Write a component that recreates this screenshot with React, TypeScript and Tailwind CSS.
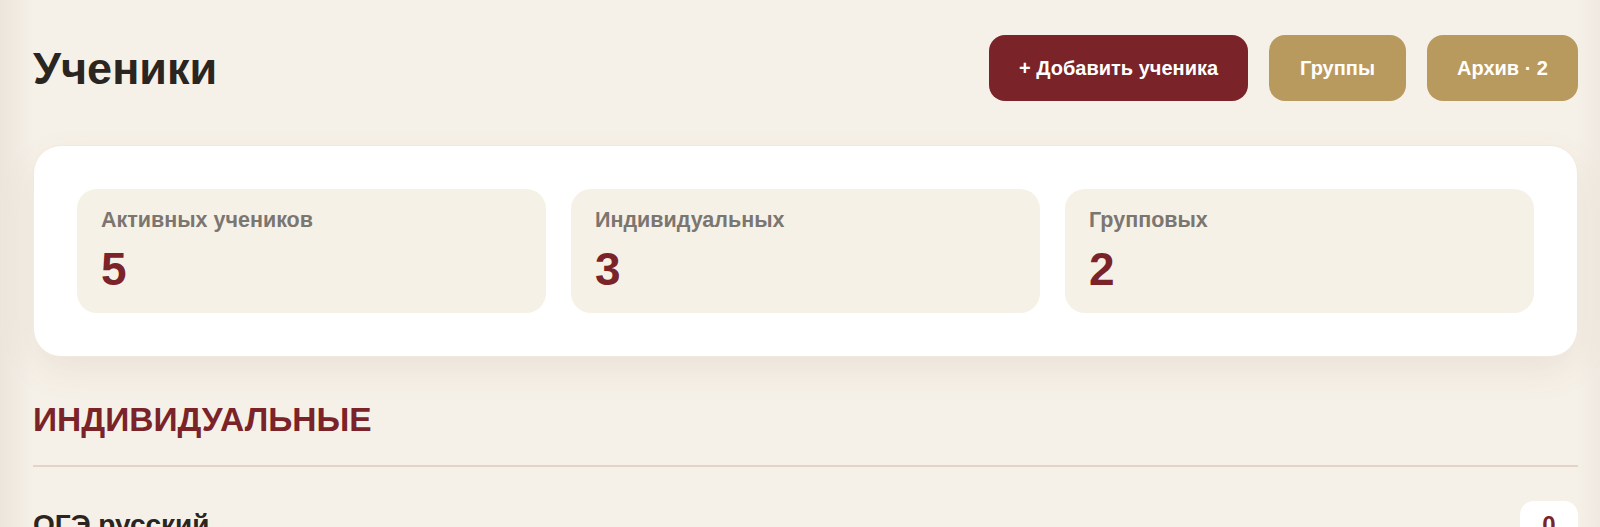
import React from "react";

const stats = [
  { label: "Активных учеников", value: "5" },
  { label: "Индивидуальных", value: "3" },
  { label: "Групповых", value: "2" },
];

export default function App() {
  return (
    <div className="min-h-screen bg-[#f6f1e8] bg-[linear-gradient(90deg,#ebe5dc_0px,#f6f1e8_34px,#f6f1e8_calc(100%-24px),#efe9e0_100%)] pl-[33px] pr-[22px] pt-[35px] font-['Liberation_Sans',Arial,sans-serif]">
      <header className="flex h-[66px] items-center justify-between">
        <h1 className="text-[45px] font-bold leading-none text-[#2a2520]">Ученики</h1>
        <div className="flex gap-[21px]">
          <button className="h-[66px] rounded-[16px] bg-[#7a2328] px-[30px] text-[20px] font-bold text-white">
            + Добавить ученика
          </button>
          <button className="h-[66px] rounded-[16px] bg-[#b99a5e] px-[31px] text-[20px] font-bold text-white">
            Группы
          </button>
          <button className="h-[66px] rounded-[16px] bg-[#b99a5e] px-[30px] text-[20px] font-bold text-white">
            Архив · 2
          </button>
        </div>
      </header>

      <section className="mt-[44px] grid grid-cols-3 gap-[25px] rounded-[28px] border border-[#f0e9de] bg-white p-[43px] shadow-[0_14px_36px_rgba(110,70,40,0.08)]">
        {stats.map((s) => (
          <div key={s.label} className="h-[124px] rounded-[20px] bg-[#f6f1e7] px-6 pt-[18px]">
            <div className="text-[21.5px] font-bold leading-[26px] text-[#7b7670]">{s.label}</div>
            <div className="mt-[13px] text-[46px] font-bold leading-none text-[#7a2328]">{s.value}</div>
          </div>
        ))}
      </section>

      <h2 className="mt-[46px] border-b-2 border-[#e5d2c9] pb-[28px] text-[33.5px] font-bold leading-none text-[#7a2328]">
        ИНДИВИДУАЛЬНЫЕ
      </h2>

      <div className="mt-[34px] flex items-center justify-between">
        <div className="text-[28px] font-bold leading-none text-[#2a2520]">ОГЭ русский</div>
        <div className="flex h-[48px] w-[58px] items-center justify-center rounded-[14px] bg-white text-[24px] font-bold text-[#7a2328]">
          0
        </div>
      </div>
    </div>
  );
}
